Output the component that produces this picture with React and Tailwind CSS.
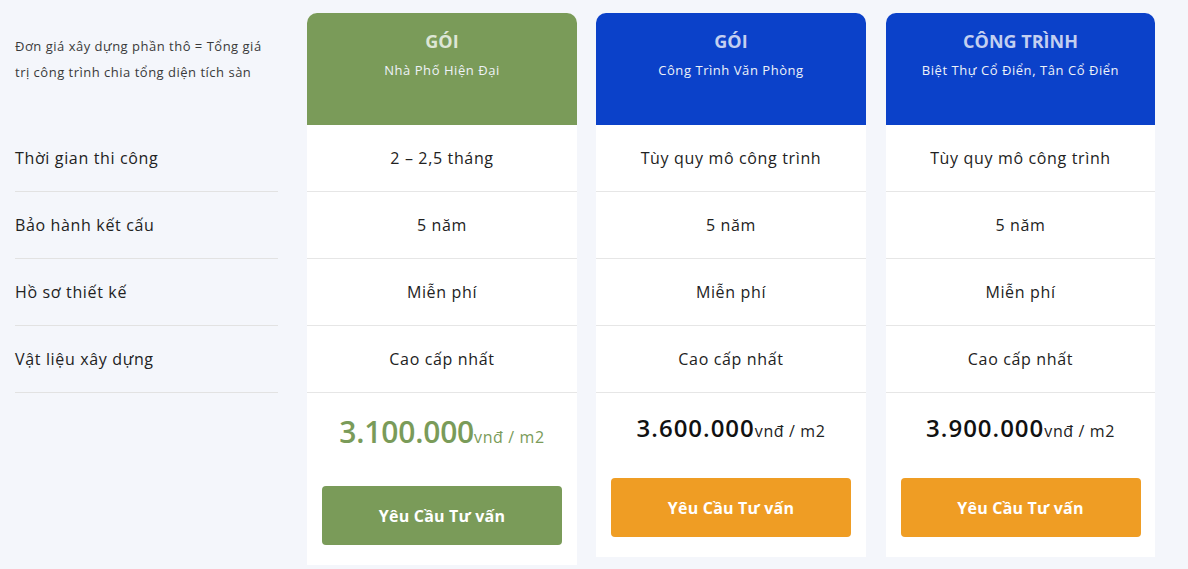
import React from "react";

const rows = ["Thời gian thi công", "Bảo hành kết cấu", "Hồ sơ thiết kế", "Vật liệu xây dựng"];

const cards = [
  {
    title: "GÓI",
    sub: "Nhà Phố Hiện Đại",
    header: "bg-[#7a9b59]",
    titleColor: "text-[#dde6d5]",
    values: ["2 – 2,5 tháng", "5 năm", "Miễn phí", "Cao cấp nhất"],
    price: "3.100.000",
    big: true,
    box: "w-[270px]",
  },
  {
    title: "GÓI",
    sub: "Công Trình Văn Phòng",
    header: "bg-[#0b41c9]",
    titleColor: "text-[#c3cff0]",
    values: ["Tùy quy mô công trình", "5 năm", "Miễn phí", "Cao cấp nhất"],
    price: "3.600.000",
    big: false,
    box: "w-[270px]",
  },
  {
    title: "CÔNG TRÌNH",
    sub: "Biệt Thự Cổ Điển, Tân Cổ Điển",
    header: "bg-[#0b41c9]",
    titleColor: "text-[#c3cff0]",
    values: ["Tùy quy mô công trình", "5 năm", "Miễn phí", "Cao cấp nhất"],
    price: "3.900.000",
    big: false,
    box: "w-[269px] ml-[1px]",
  },
];

function Card({ c }) {
  return (
    <div className={`${c.box} bg-white rounded-t-[10px] overflow-hidden self-start`}>
      <div className={`${c.header} h-[112px] pt-[15px] text-center`}>
        <div className={`${c.titleColor} text-[18px] leading-[27px] font-bold tracking-normal`}>{c.title}</div>
        <div className="text-[#eef2f8] text-[13px] leading-[20px] mt-[5px] tracking-[0.55px]">{c.sub}</div>
      </div>
      {c.values.map((v, i) => (
        <div
          key={i}
          className="h-[67px] flex items-center justify-center border-b border-[#e6e6e6] text-[16px] text-[#222] tracking-[0.65px]"
        >
          {v}
        </div>
      ))}
      <div className="pt-[17px] pb-[20px] px-[15px] flex flex-col items-center">
        {c.big ? (
          <div className="h-[44px] flex items-baseline text-[#7a9b59]">
            <span className="text-[30px] leading-[44px] font-semibold tracking-[-0.2px]">{c.price}</span>
            <span className="text-[16px] text-[#7a9b59] tracking-[0.6px]">vnđ / m2</span>
          </div>
        ) : (
          <div className="h-[36px] flex items-baseline text-[#111]">
            <span className="text-[24px] leading-[36px] font-semibold tracking-[1px]">{c.price}</span>
            <span className="text-[16px] text-[#222] tracking-[0.6px]">vnđ / m2</span>
          </div>
        )}
        <button
          className={`mt-[32px] w-[240px] h-[59px] rounded-[4px] text-white font-bold text-[16px] tracking-[0.2px] ${
            c.big ? "bg-[#7a9b59]" : "bg-[#ef9d24]"
          }`}
        >
          Yêu Cầu Tư vấn
        </button>
      </div>
    </div>
  );
}

export default function App() {
  return (
    <div
      className="w-[1188px] h-[569px] bg-[#f4f6fb] overflow-hidden"
      style={{ fontFamily: '"Open Sans", "Noto Sans", sans-serif' }}
    >
      <div className="flex pt-[13px] pl-[15px]">
        <div className="w-[263px] mr-[29px]">
          <div className="h-[112px] pt-[20px] text-[13px] leading-[26px] text-[#3a3a3a] tracking-[0.5px]">
            Đơn giá xây dựng phần thô = Tổng giá trị công trình chia tổng diện tích sàn
          </div>
          {rows.map((r) => (
            <div
              key={r}
              className="h-[67px] flex items-center border-b border-[#e2e2e2] text-[16px] text-[#222] tracking-[0.65px]"
            >
              {r}
            </div>
          ))}
        </div>
        <div className="flex gap-[19px]">
          {cards.map((c, i) => (
            <Card key={i} c={c} />
          ))}
        </div>
      </div>
    </div>
  );
}
